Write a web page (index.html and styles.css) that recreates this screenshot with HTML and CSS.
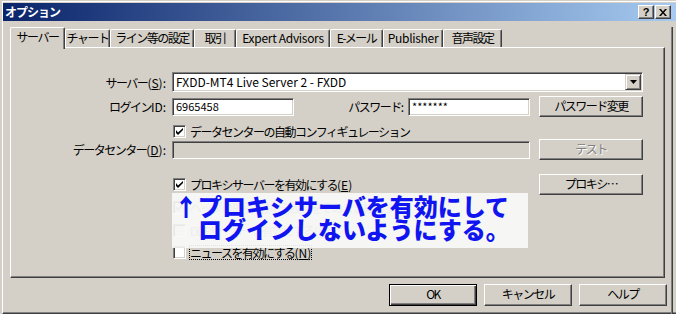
FILE: index.html
```html
<!DOCTYPE html>
<html lang="ja">
<head>
    <meta charset="UTF-8">
    <title>オプション</title>
    <link rel="stylesheet" href="styles.css">
</head>
<body>

<div class="window">
    <div class="frame">
        <div class="titlebar">
            <span class="title">オプション</span>
            <div class="caption-buttons">
                <span class="cap-btn">?</span>
                <span class="cap-btn">
                    <svg width="8" height="7" viewBox="0 0 8 7"><path d="M0 0h2l2 2.5L6 0h2L5 3.5 8 7H6L4 4.5 2 7H0l3-3.5z" fill="#000"/></svg>
                </span>
            </div>
        </div>

        <div class="client">
            <div class="tabs">
                <div class="tab active w-server">サーバー</div>
                <div class="tab w-chart">チャート</div>
                <div class="tab w-line">ライン等の設定</div>
                <div class="tab w-trade">取引</div>
                <div class="tab latin w-ea">Expert Advisors</div>
                <div class="tab w-mail">E-メール</div>
                <div class="tab latin w-pub">Publisher</div>
                <div class="tab w-sound">音声設定</div>
            </div>

            <div class="panel">
                <div class="row row-server">
                    <label class="label">サーバー<span class="lat">(<u>S</u>):</span></label>
                    <div class="combo">
                        <span class="combo-text">FXDD-MT4 Live Server 2 - FXDD</span>
                        <span class="combo-btn">
                            <svg width="7" height="4" viewBox="0 0 7 4"><path d="M0 0h7L3.5 4z" fill="#000"/></svg>
                        </span>
                    </div>
                </div>

                <div class="row row-login">
                    <label class="label">ログイン<span class="lat">ID:</span></label>
                    <div class="field w-login">6965458</div>
                    <label class="label-pass">パスワード<span class="lat">:</span></label>
                    <div class="field w-pass">*******</div>
                    <div class="button w-side">パスワード変更</div>
                </div>

                <div class="row row-auto">
                    <div class="check-item">
                        <span class="checkbox checked"><svg width="7" height="7" viewBox="0 0 7 7"><path d="M0 2v3l2 2 5-5V-0L2 4.5z" fill="#000"/></svg></span>
                        <span>データセンターの自動コンフィギュレーション</span>
                    </div>
                </div>

                <div class="row row-dc">
                    <label class="label">データセンター<span class="lat">(<u>D</u>):</span></label>
                    <div class="field disabled w-dc"></div>
                    <div class="button disabled w-side">テスト</div>
                </div>

                <div class="row row-proxy">
                    <div class="check-item">
                        <span class="checkbox checked"><svg width="7" height="7" viewBox="0 0 7 7"><path d="M0 2v3l2 2 5-5V-0L2 4.5z" fill="#000"/></svg></span>
                        <span>プロキシサーバーを有効にする<span class="lat">(<u>E</u>)</span></span>
                    </div>
                    <div class="button w-side">プロキシ…</div>
                </div>

                <div class="row row-grey1">
                    <div class="check-item greyed">
                        <span class="checkbox checked"><svg width="7" height="7" viewBox="0 0 7 7"><path d="M0 2v3l2 2 5-5V-0L2 4.5z" fill="#808080"/></svg></span>
                        <span>ヘッダの取引時刻(日)設定をそのまま維持する</span>
                    </div>
                </div>

                <div class="row row-grey2">
                    <div class="check-item greyed">
                        <span class="checkbox"></span>
                        <span>DDEサーバーを有効にする<span class="lat">(<u>D</u>)</span></span>
                    </div>
                </div>

                <div class="row row-news">
                    <div class="check-item">
                        <span class="checkbox"></span>
                        <span class="focus">ニュースを有効にする<span class="lat">(<u>N</u>)</span></span>
                    </div>
                </div>

                <div class="note">
                    <div class="note-line">↑プロキシサーバを有効にして</div>
                    <div class="note-line indent">ログインしないようにする。</div>
                </div>
            </div>

            <div class="footer">
                <div class="button default">OK</div>
                <div class="button">キャンセル</div>
                <div class="button">ヘルプ</div>
            </div>
        </div>
    </div>
</div>

</body>
</html>
```

FILE: styles.css
```css
body {
    margin: 0;
    background: #d4d0c8;
    font-family: 'Noto Sans CJK JP', 'Noto Sans', sans-serif;
    font-size: 12px;
    letter-spacing: -1.5px;
    color: #000;
}
.lat {
    letter-spacing: 0;
}
.window {
    width: 676px;
    height: 314px;
    box-sizing: border-box;
    padding: 1px 0 0 2px;
    background: #d4d0c8;
    overflow: hidden;
}
.frame {
    height: 100%;
    box-sizing: border-box;
    border-left: 1px solid #fff;
    border-top: 1px solid #fff;
    border-bottom: 1px solid #404040;
    box-shadow: inset 0 -1px #808080;
    padding-top: 1px;
}

/* タイトルバー */
.titlebar {
    height: 18px;
    display: flex;
    align-items: center;
    justify-content: space-between;
    background: linear-gradient(to right, #0a246a, #a6caf0);
}
.title {
    color: #fff;
    font-weight: bold;
    padding-left: 2px;
    line-height: 18px;
    letter-spacing: -1px;
}
.caption-buttons {
    display: flex;
    gap: 1px;
    margin-right: 5px;
}
.cap-btn {
    width: 14px;
    height: 12px;
    background: #d4d0c8;
    border: 1px solid;
    border-color: #fff #404040 #404040 #fff;
    box-shadow: inset -1px -1px #808080;
    display: flex;
    align-items: center;
    justify-content: center;
    font-family: 'Liberation Sans', sans-serif;
    font-weight: bold;
    font-size: 11px;
    line-height: 12px;
    letter-spacing: 0;
}

/* クライアント */
.client {
    height: 292px;
    margin-right: 3px;
    border-right: 1px solid #404040;
    box-shadow: inset -1px 0 #808080;
}
.tabs {
    display: flex;
    align-items: flex-end;
    margin: 6px 0 0 7px;
    height: 20px;
}
.tab {
    box-sizing: border-box;
    height: 18px;
    border-top: 1px solid #fff;
    border-left: 1px solid #fff;
    border-right: 1px solid #404040;
    box-shadow: inset -1px 0 #808080;
    border-radius: 2px 2px 0 0;
    text-align: center;
    line-height: 16px;
    white-space: nowrap;
    letter-spacing: -1.5px;
}
.tab.latin { letter-spacing: -0.3px; }
.tab.active {
    height: 22px;
    margin-bottom: -2px;
    position: relative;
    z-index: 1;
    background: #d4d0c8;
    line-height: 18px;
}
.w-server { width: 55px; }
.w-chart { width: 45px; }
.w-line { width: 84px; }
.w-trade { width: 42px; }
.w-ea { width: 94px; }
.w-mail { width: 53px; }
.w-pub { width: 60px; }
.w-sound { width: 59px; }

.panel {
    position: relative;
    box-sizing: border-box;
    margin-left: 7px;
    width: 655px;
    height: 231px;
    border: 1px solid;
    border-color: #fff #404040 #404040 #fff;
    box-shadow: inset -1px -1px #808080;
    padding-top: 24px;
}
.row {
    display: flex;
    align-items: center;
}
.label {
    width: 155px;
    margin-right: 6px;
    text-align: right;
    white-space: nowrap;
}
.label-pass {
    width: 110px;
    margin-right: 4px;
    text-align: right;
}
.row-server { height: 20px; }
.row-login { height: 21px; margin-top: 4px; }
.row-auto { height: 14px; margin-top: 7px; }
.row-dc { height: 21px; margin-top: 1px; }
.row-proxy { height: 21px; margin-top: 14px; }
.row-grey1 { height: 14px; margin-top: 5px; }
.row-grey2 { height: 14px; margin-top: 9px; }
.row-news { height: 14px; margin-top: 8px; }

.combo, .field {
    box-sizing: border-box;
    background: #fff;
    border: 1px solid;
    border-color: #808080 #fff #fff #808080;
    box-shadow: inset 1px 1px #404040, inset -1px -1px #d4d0c8;
}
.combo {
    width: 471px;
    height: 20px;
    display: flex;
    align-items: center;
    justify-content: space-between;
    padding: 1px;
}
.combo-text {
    padding-left: 2px;
    line-height: 16px;
    letter-spacing: 0;
}
.combo-btn {
    width: 14px;
    height: 14px;
    background: #d4d0c8;
    border: 1px solid;
    border-color: #d4d0c8 #404040 #404040 #d4d0c8;
    box-shadow: inset 1px 1px #fff, inset -1px -1px #808080;
    display: flex;
    align-items: center;
    justify-content: center;
}
.field {
    height: 18px;
    padding-left: 3px;
    line-height: 15px;
    font-size: 11px;
    letter-spacing: 0;
}
.field.disabled { background: #d4d0c8; }
.w-login { width: 122px; }
.w-pass { width: 122px; }
.w-dc { width: 358px; }

.button {
    box-sizing: border-box;
    height: 21px;
    background: #d4d0c8;
    border: 1px solid;
    border-color: #fff #404040 #404040 #fff;
    box-shadow: inset -1px -1px #808080;
    text-align: center;
    line-height: 18px;
}
.button.disabled {
    color: #808080;
    text-shadow: 1px 1px #fff;
}
.w-side {
    width: 104px;
    margin-left: 9px;
}

.check-item {
    display: flex;
    align-items: center;
    gap: 4px;
    margin-left: 162px;
    white-space: nowrap;
}
.row-proxy .w-side { margin-left: 0; }
.row-proxy .check-item { width: 366px; }
.checkbox {
    box-sizing: border-box;
    width: 13px;
    height: 13px;
    background: #fff;
    border: 1px solid;
    border-color: #808080 #fff #fff #808080;
    box-shadow: inset 1px 1px #404040, inset -1px -1px #d4d0c8;
    display: flex;
    align-items: center;
    justify-content: center;
}
.greyed { color: #808080; }
.greyed .checkbox { background: #d4d0c8; }
.focus {
    outline: 1px dotted #000;
    line-height: 13px;
}

/* 注記 */
.note {
    position: absolute;
    left: 161px;
    top: 145px;
    width: 356px;
    height: 55px;
    box-sizing: border-box;
    padding: 1px 0 0 2px;
    background: rgba(250, 250, 250, 0.9);
    color: #0f14f0;
    font-weight: 900;
    font-size: 24px;
    line-height: 23px;
    letter-spacing: 0;
    white-space: nowrap;
}
.note-line.indent { padding-left: 24px; }

.footer {
    display: flex;
    justify-content: flex-end;
    gap: 7px;
    margin-top: 6px;
    padding-right: 5px;
}
.footer .button {
    width: 88px;
    height: 22px;
}
.footer .button.default {
    border: 1px solid #000;
    box-shadow: inset 1px 1px #fff, inset -1px -1px #404040, inset -2px -2px #808080;
}
```
